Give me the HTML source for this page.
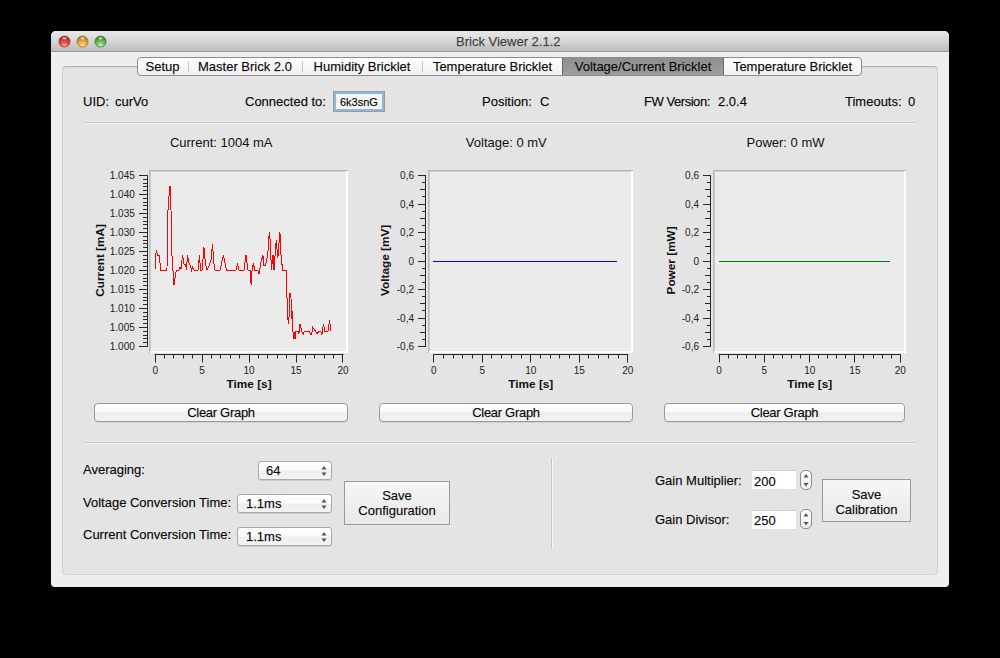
<!DOCTYPE html>
<html><head><meta charset="utf-8"><style>
*{box-sizing:border-box}
html,body{margin:0;padding:0}
body{width:1000px;height:658px;background:#000;position:relative;overflow:hidden;font-family:"Liberation Sans", sans-serif;font-size:13px;color:#0a0a0a;-webkit-text-stroke:0.25px rgba(0,0,0,0.6)}
.a{position:absolute}
.t{position:absolute;white-space:nowrap;line-height:16px;font-size:13px}
.btn{position:absolute;border:1px solid #9a9a9a;border-radius:4px;background:linear-gradient(#ffffff 0%,#fbfbfb 40%,#eeeeee 55%,#f2f2f2 100%);box-shadow:0 1px 0 rgba(0,0,0,0.08)}
.sbtn{position:absolute;border:1px solid #9a9a9a;background:linear-gradient(#f6f6f6,#e9e9e9)}
.combo{position:absolute;border:1px solid #a9a9a9;border-radius:3px;background:linear-gradient(#ffffff 0%,#fafafa 45%,#eeeeee 55%,#f3f3f3 100%);box-shadow:0 1px 0 rgba(0,0,0,0.1)}
.tab{position:absolute;top:58px;height:19px;text-align:center;line-height:17px;white-space:nowrap}
</style></head><body>
<div class="a" style="left:51px;top:31px;width:898px;height:556px;background:#eeeeee;border-radius:5px 5px 4px 4px;overflow:hidden">
  <div class="a" style="left:0;top:0;width:898px;height:21px;background:linear-gradient(#e9e9e9,#d4d4d4 55%,#bcbcbc);border-bottom:1px solid #9a9a9a"></div>
</div>
<div class="t" style="left:456px;top:34px;color:#4d4d4d">Brick Viewer 2.1.2</div>
<svg class="a" style="left:0;top:0" width="120" height="60">
<defs>
<radialGradient id="gr" cx="50%" cy="90%" r="75%"><stop offset="0" stop-color="#ffb4ac"/><stop offset="0.45" stop-color="#f2524a"/><stop offset="0.85" stop-color="#c8342e"/><stop offset="1" stop-color="#a02c28"/></radialGradient>
<radialGradient id="go" cx="50%" cy="90%" r="75%"><stop offset="0" stop-color="#ffeaa2"/><stop offset="0.45" stop-color="#f6b548"/><stop offset="0.85" stop-color="#d28c30"/><stop offset="1" stop-color="#a8742e"/></radialGradient>
<radialGradient id="gg" cx="50%" cy="90%" r="75%"><stop offset="0" stop-color="#d8f8c2"/><stop offset="0.45" stop-color="#7ec862"/><stop offset="0.85" stop-color="#52a040"/><stop offset="1" stop-color="#3e7a34"/></radialGradient>
<radialGradient id="gh" cx="50%" cy="50%" r="50%"><stop offset="0" stop-color="#fff" stop-opacity="0.9"/><stop offset="1" stop-color="#fff" stop-opacity="0"/></radialGradient>
</defs>
<circle cx="64.5" cy="41.5" r="5.5" fill="url(#gr)" stroke="#8c3430" stroke-width="0.8"/>
<circle cx="82.5" cy="41.5" r="5.5" fill="url(#go)" stroke="#966c30" stroke-width="0.8"/>
<circle cx="100.5" cy="41.5" r="5.5" fill="url(#gg)" stroke="#3e7634" stroke-width="0.8"/>
<ellipse cx="64.5" cy="38.3" rx="3" ry="1.7" fill="url(#gh)"/>
<ellipse cx="82.5" cy="38.3" rx="3" ry="1.7" fill="url(#gh)"/>
<ellipse cx="100.5" cy="38.3" rx="3" ry="1.7" fill="url(#gh)"/>
</svg>
<!-- tab panel -->
<div class="a" style="left:62px;top:66px;width:876px;height:509px;border:1px solid #d2d2d2;border-top-color:#b2b2b2;border-radius:4px;background:#e4e4e4;box-shadow:inset 0 1px 1px rgba(0,0,0,0.07)"></div>
<!-- tabs -->
<div class="a" style="left:137px;top:57px;width:725px;height:19px;border:1px solid #8c8c8c;border-radius:4px;background:linear-gradient(#ffffff,#f0f0f0);overflow:hidden">
  <div class="a" style="left:425px;top:0;width:160px;height:17px;background:linear-gradient(#8f8f8f,#9d9d9d)"></div>
  <div class="a" style="left:50px;top:3px;width:1px;height:11px;background:#c8c8c8"></div>
  <div class="a" style="left:164px;top:3px;width:1px;height:11px;background:#c8c8c8"></div>
  <div class="a" style="left:284px;top:3px;width:1px;height:11px;background:#c8c8c8"></div>
  <div class="a" style="left:424px;top:0px;width:1px;height:17px;background:#6a6a6a"></div>
  <div class="a" style="left:585px;top:0px;width:1px;height:17px;background:#6a6a6a"></div>
</div>
<div class="tab" style="left:137px;width:51px">Setup</div>
<div class="tab" style="left:188px;width:114px">Master Brick 2.0</div>
<div class="tab" style="left:302px;width:120px">Humidity Bricklet</div>
<div class="tab" style="left:422px;width:141px">Temperature Bricklet</div>
<div class="tab" style="left:563px;width:160px">Voltage/Current Bricklet</div>
<div class="tab" style="left:723px;width:139px">Temperature Bricklet</div>
<!-- header -->
<div class="t" style="left:83px;top:94px">UID:</div>
<div class="t" style="left:115px;top:94px">curVo</div>
<div class="t" style="left:245px;top:94px">Connected to:</div>
<div class="a" style="left:333px;top:91px;width:52px;height:21px;border:1px solid #9c9c9c;background:#f4f4f4;box-shadow:inset 0 0 0 2px #88b8e4"></div>
<div class="t" style="left:340px;top:94px;font-size:11px">6k3snG</div>
<div class="t" style="left:482px;top:94px">Position:</div>
<div class="t" style="left:540px;top:94px">C</div>
<div class="t" style="left:644px;top:94px;letter-spacing:-0.45px">FW Version:</div>
<div class="t" style="left:718px;top:94px">2.0.4</div>
<div class="t" style="left:845px;top:94px">Timeouts:</div>
<div class="t" style="left:908px;top:94px">0</div>
<div class="a" style="left:83px;top:122px;width:834px;height:1px;background:#c9c9c9"></div>
<div class="a" style="left:83px;top:123px;width:834px;height:1px;background:#f2f2f2"></div>
<svg class="a" style="left:0;top:0" width="1000" height="658" font-family='"Liberation Sans", sans-serif'><g shape-rendering="crispEdges"><rect x="149" y="170" width="199" height="183" fill="#ebebeb"/><rect x="149" y="170" width="199" height="1" fill="#b3b3b3"/><rect x="149" y="170" width="1" height="183" fill="#bcbcbc"/><rect x="150" y="171" width="198" height="1" fill="#cfcfcf"/><rect x="150" y="171" width="1" height="182" fill="#c9c9c9"/><rect x="150" y="351" width="198" height="2" fill="#ffffff"/><rect x="346" y="171" width="2" height="182" fill="#ffffff"/></g><path d="M147.5 175 V346.5" stroke="#262626" stroke-width="1" fill="none"/><path d="M139 175.5H148M143 179.5H148M143 183.5H148M143 186.5H148M143 190.5H148M139 194.5H148M143 198.5H148M143 202.5H148M143 205.5H148M143 209.5H148M139 213.5H148M143 217.5H148M143 221.5H148M143 224.5H148M143 228.5H148M139 232.5H148M143 236.5H148M143 240.5H148M143 243.5H148M143 247.5H148M139 251.5H148M143 255.5H148M143 259.5H148M143 262.5H148M143 266.5H148M139 270.5H148M143 274.5H148M143 278.5H148M143 281.5H148M143 285.5H148M139 289.5H148M143 293.5H148M143 297.5H148M143 300.5H148M143 304.5H148M139 308.5H148M143 312.5H148M143 316.5H148M143 319.5H148M143 323.5H148M139 327.5H148M143 331.5H148M143 335.5H148M143 338.5H148M143 342.5H148M139 346.5H148" stroke="#262626" stroke-width="1" fill="none"/><text x="134.8" y="179.1" text-anchor="end" font-size="10" fill="#222">1.045</text><text x="134.8" y="198.1" text-anchor="end" font-size="10" fill="#222">1.040</text><text x="134.8" y="217.1" text-anchor="end" font-size="10" fill="#222">1.035</text><text x="134.8" y="236.1" text-anchor="end" font-size="10" fill="#222">1.030</text><text x="134.8" y="255.1" text-anchor="end" font-size="10" fill="#222">1.025</text><text x="134.8" y="274.1" text-anchor="end" font-size="10" fill="#222">1.020</text><text x="134.8" y="293.1" text-anchor="end" font-size="10" fill="#222">1.015</text><text x="134.8" y="312.1" text-anchor="end" font-size="10" fill="#222">1.010</text><text x="134.8" y="331.1" text-anchor="end" font-size="10" fill="#222">1.005</text><text x="134.8" y="350.1" text-anchor="end" font-size="10" fill="#222">1.000</text><path d="M154.7 354.5 H343.5" stroke="#262626" stroke-width="1" fill="none"/><path d="M155.5 354.5V362.5M164.5 354.5V358.5M173.5 354.5V358.5M183.5 354.5V358.5M192.5 354.5V358.5M202.5 354.5V362.5M211.5 354.5V358.5M220.5 354.5V358.5M230.5 354.5V358.5M239.5 354.5V358.5M249.5 354.5V362.5M258.5 354.5V358.5M267.5 354.5V358.5M277.5 354.5V358.5M286.5 354.5V358.5M296.5 354.5V362.5M305.5 354.5V358.5M314.5 354.5V358.5M324.5 354.5V358.5M333.5 354.5V358.5M342.5 354.5V362.5" stroke="#262626" stroke-width="1" fill="none"/><text x="155.2" y="374.3" text-anchor="middle" font-size="10" fill="#222">0</text><text x="202.1" y="374.3" text-anchor="middle" font-size="10" fill="#222">5</text><text x="249.1" y="374.3" text-anchor="middle" font-size="10" fill="#222">10</text><text x="296.0" y="374.3" text-anchor="middle" font-size="10" fill="#222">15</text><text x="343.0" y="374.3" text-anchor="middle" font-size="10" fill="#222">20</text><text x="249.1" y="387.6" text-anchor="middle" font-size="11.8" font-weight="bold" fill="#111">Time [s]</text><text transform="translate(103.8 260.4) rotate(-90)" text-anchor="middle" font-size="11.8" font-weight="bold" fill="#111">Current [mA]</text><text x="221.2" y="146.5" text-anchor="middle" font-size="13" fill="#111">Current: 1004 mA</text><g shape-rendering="crispEdges"><rect x="428" y="170" width="205" height="183" fill="#ebebeb"/><rect x="428" y="170" width="205" height="1" fill="#b3b3b3"/><rect x="428" y="170" width="1" height="183" fill="#bcbcbc"/><rect x="429" y="171" width="204" height="1" fill="#cfcfcf"/><rect x="429" y="171" width="1" height="182" fill="#c9c9c9"/><rect x="429" y="351" width="204" height="2" fill="#ffffff"/><rect x="631" y="171" width="2" height="182" fill="#ffffff"/></g><path d="M425.5 175 V346.5" stroke="#262626" stroke-width="1" fill="none"/><path d="M418 175.5H426M422 182.5H426M420 189.5H426M422 196.5H426M418 204.5H426M422 211.5H426M420 218.5H426M422 225.5H426M418 232.5H426M422 239.5H426M420 246.5H426M422 253.5H426M418 261.5H426M422 268.5H426M420 275.5H426M422 282.5H426M418 289.5H426M422 296.5H426M420 303.5H426M422 310.5H426M418 318.5H426M422 325.5H426M420 332.5H426M422 339.5H426M418 346.5H426" stroke="#262626" stroke-width="1" fill="none"/><text x="414" y="179.1" text-anchor="end" font-size="10" fill="#222">0,6</text><text x="414" y="208.1" text-anchor="end" font-size="10" fill="#222">0,4</text><text x="414" y="236.1" text-anchor="end" font-size="10" fill="#222">0,2</text><text x="414" y="265.1" text-anchor="end" font-size="10" fill="#222">0</text><text x="414" y="293.1" text-anchor="end" font-size="10" fill="#222">-0,2</text><text x="414" y="322.1" text-anchor="end" font-size="10" fill="#222">-0,4</text><text x="414" y="350.1" text-anchor="end" font-size="10" fill="#222">-0,6</text><path d="M433.3 354.5 H628.2" stroke="#262626" stroke-width="1" fill="none"/><path d="M433.5 354.5V362.5M443.5 354.5V358.5M453.5 354.5V358.5M462.5 354.5V358.5M472.5 354.5V358.5M482.5 354.5V362.5M491.5 354.5V358.5M501.5 354.5V358.5M511.5 354.5V358.5M521.5 354.5V358.5M530.5 354.5V362.5M540.5 354.5V358.5M550.5 354.5V358.5M559.5 354.5V358.5M569.5 354.5V358.5M579.5 354.5V362.5M588.5 354.5V358.5M598.5 354.5V358.5M608.5 354.5V358.5M618.5 354.5V358.5M627.5 354.5V362.5" stroke="#262626" stroke-width="1" fill="none"/><text x="433.8" y="374.3" text-anchor="middle" font-size="10" fill="#222">0</text><text x="482.3" y="374.3" text-anchor="middle" font-size="10" fill="#222">5</text><text x="530.8" y="374.3" text-anchor="middle" font-size="10" fill="#222">10</text><text x="579.2" y="374.3" text-anchor="middle" font-size="10" fill="#222">15</text><text x="627.7" y="374.3" text-anchor="middle" font-size="10" fill="#222">20</text><text x="530.8" y="387.6" text-anchor="middle" font-size="11.8" font-weight="bold" fill="#111">Time [s]</text><text transform="translate(388.8 260.4) rotate(-90)" text-anchor="middle" font-size="11.8" font-weight="bold" fill="#111">Voltage [mV]</text><text x="506.3" y="146.5" text-anchor="middle" font-size="13" fill="#111">Voltage: 0 mV</text><g shape-rendering="crispEdges"><rect x="713" y="170" width="193" height="183" fill="#ebebeb"/><rect x="713" y="170" width="193" height="1" fill="#b3b3b3"/><rect x="713" y="170" width="1" height="183" fill="#bcbcbc"/><rect x="714" y="171" width="192" height="1" fill="#cfcfcf"/><rect x="714" y="171" width="1" height="182" fill="#c9c9c9"/><rect x="714" y="351" width="192" height="2" fill="#ffffff"/><rect x="904" y="171" width="2" height="182" fill="#ffffff"/></g><path d="M710.5 175 V346.5" stroke="#262626" stroke-width="1" fill="none"/><path d="M703 175.5H711M707 182.5H711M705 189.5H711M707 196.5H711M703 204.5H711M707 211.5H711M705 218.5H711M707 225.5H711M703 232.5H711M707 239.5H711M705 246.5H711M707 253.5H711M703 261.5H711M707 268.5H711M705 275.5H711M707 282.5H711M703 289.5H711M707 296.5H711M705 303.5H711M707 310.5H711M703 318.5H711M707 325.5H711M705 332.5H711M707 339.5H711M703 346.5H711" stroke="#262626" stroke-width="1" fill="none"/><text x="699" y="179.1" text-anchor="end" font-size="10" fill="#222">0,6</text><text x="699" y="208.1" text-anchor="end" font-size="10" fill="#222">0,4</text><text x="699" y="236.1" text-anchor="end" font-size="10" fill="#222">0,2</text><text x="699" y="265.1" text-anchor="end" font-size="10" fill="#222">0</text><text x="699" y="293.1" text-anchor="end" font-size="10" fill="#222">-0,2</text><text x="699" y="322.1" text-anchor="end" font-size="10" fill="#222">-0,4</text><text x="699" y="350.1" text-anchor="end" font-size="10" fill="#222">-0,6</text><path d="M718.6 354.5 H900.7" stroke="#262626" stroke-width="1" fill="none"/><path d="M719.5 354.5V362.5M728.5 354.5V358.5M737.5 354.5V358.5M746.5 354.5V358.5M755.5 354.5V358.5M764.5 354.5V362.5M773.5 354.5V358.5M782.5 354.5V358.5M791.5 354.5V358.5M800.5 354.5V358.5M809.5 354.5V362.5M818.5 354.5V358.5M827.5 354.5V358.5M836.5 354.5V358.5M845.5 354.5V358.5M854.5 354.5V362.5M863.5 354.5V358.5M873.5 354.5V358.5M882.5 354.5V358.5M891.5 354.5V358.5M900.5 354.5V362.5" stroke="#262626" stroke-width="1" fill="none"/><text x="719.1" y="374.3" text-anchor="middle" font-size="10" fill="#222">0</text><text x="764.4" y="374.3" text-anchor="middle" font-size="10" fill="#222">5</text><text x="809.7" y="374.3" text-anchor="middle" font-size="10" fill="#222">10</text><text x="854.9" y="374.3" text-anchor="middle" font-size="10" fill="#222">15</text><text x="900.2" y="374.3" text-anchor="middle" font-size="10" fill="#222">20</text><text x="809.7" y="387.6" text-anchor="middle" font-size="11.8" font-weight="bold" fill="#111">Time [s]</text><text transform="translate(674.5999999999999 260.4) rotate(-90)" text-anchor="middle" font-size="11.8" font-weight="bold" fill="#111">Power [mW]</text><text x="785.5" y="146.5" text-anchor="middle" font-size="13" fill="#111">Power: 0 mW</text><polyline fill="none" stroke="#ff0000" stroke-width="1" shape-rendering="crispEdges" points="155,270 155.5,255 156.5,251.5 157.5,255 159.5,255 160.5,270 167,270 167.2,237 168,210 169.7,186.7 170.4,186.7 171,210 172,256 174,285 176,272 177,270 179,270 180,267 181,269 182.5,255 184,264 185.5,264 186.5,270 187.5,255 189,263 190.5,266 191.5,270 192.5,267 194,270 198,270 199.5,255 200.5,270 202,270 204,247.5 205.5,264 207,270 209,266 211,260 212.5,244.5 214,264 215,270 220,270 223.5,255 226.5,270 236,270 237.5,263.5 239,270 244,270 246,255 247.5,266.8 248,270 250.1,270 251.2,285.4 252.2,267.9 253.3,263.6 254.9,270 257.6,270 259.1,274.3 260.7,263.6 262.9,255.1 263.9,265.7 265.5,265.7 267.7,255.1 269.3,232.2 270.3,241.3 271.4,270 273,255.1 274,270 276.2,240.2 277.8,258.3 279.9,232.2 281,255.1 282.6,270 286.3,270 286.7,286.9 287.5,316 288.5,323.9 289.1,316 289.7,293.6 290.9,293.6 291.5,318.5 292.2,311.2 293.1,334.3 294,339.1 294.6,331.8 295.2,339.1 296,331.2 298.2,331.2 298.8,334.3 300,324.5 301.9,331.8 303.1,334.3 304.3,331.2 309.2,331.2 310.4,334.3 311.6,334.3 312.8,327.6 315.2,330.6 317,334.3 318.9,331.2 320.7,331.2 321.9,334.3 323.5,323.9 324.7,331.2 328,331.2 329.6,320.3 330.8,331.2"/><path d="M433 261.5H617" stroke="#0000ff" stroke-width="1"/><path d="M719 261.5H890" stroke="#008000" stroke-width="1"/></svg>
<!-- clear graph buttons -->
<div class="btn" style="left:94px;top:403px;width:254px;height:19px"></div>
<div class="btn" style="left:379px;top:403px;width:254px;height:19px"></div>
<div class="btn" style="left:664px;top:403px;width:241px;height:19px"></div>
<div class="t" style="left:94px;top:405px;width:254px;text-align:center;letter-spacing:-0.3px">Clear Graph</div>
<div class="t" style="left:379px;top:405px;width:254px;text-align:center;letter-spacing:-0.3px">Clear Graph</div>
<div class="t" style="left:664px;top:405px;width:241px;text-align:center;letter-spacing:-0.3px">Clear Graph</div>
<div class="a" style="left:83px;top:442px;width:834px;height:1px;background:#c9c9c9"></div>
<div class="a" style="left:83px;top:443px;width:834px;height:1px;background:#f2f2f2"></div>
<!-- bottom left -->
<div class="t" style="left:83px;top:462px">Averaging:</div>
<div class="t" style="left:83px;top:495px">Voltage Conversion Time:</div>
<div class="t" style="left:83px;top:527px">Current Conversion Time:</div>
<div class="combo" style="left:258px;top:461px;width:74px;height:19px"></div>
<div class="combo" style="left:237px;top:494px;width:95px;height:19px"></div>
<div class="combo" style="left:237px;top:527px;width:95px;height:19px"></div>
<div class="t" style="left:266px;top:463px">64</div>
<div class="t" style="left:246px;top:496px">1.1ms</div>
<div class="t" style="left:246px;top:529px">1.1ms</div>
<svg class="a" style="left:0;top:0" width="1000" height="658">
<path d="M321.5 469.5 L324 466 L326.5 469.5Z M321.5 472.5 L324 476 L326.5 472.5Z" fill="#555"/>
<path d="M321.5 502.5 L324 499 L326.5 502.5Z M321.5 505.5 L324 509 L326.5 505.5Z" fill="#555"/>
<path d="M321.5 535.5 L324 532 L326.5 535.5Z M321.5 538.5 L324 542 L326.5 538.5Z" fill="#555"/>
</svg>
<div class="sbtn" style="left:344px;top:481px;width:106px;height:44px"></div>
<div class="t" style="left:344px;top:488px;width:106px;text-align:center;line-height:15px">Save<br>Configuration</div>
<!-- separator -->
<div class="a" style="left:551px;top:458px;width:1px;height:90px;background:#c4c4c4"></div>
<div class="a" style="left:552px;top:458px;width:1px;height:90px;background:#f6f6f6"></div>
<!-- bottom right -->
<div class="t" style="left:655px;top:473px">Gain Multiplier:</div>
<div class="t" style="left:655px;top:512px">Gain Divisor:</div>
<div class="a" style="left:751px;top:470px;width:46px;height:20px;background:#fff;border:1px solid #e0e0e0;border-top-color:#cdcdcd"></div>
<div class="a" style="left:751px;top:510px;width:46px;height:20px;background:#fff;border:1px solid #e0e0e0;border-top-color:#cdcdcd"></div>
<div class="t" style="left:754px;top:474px">200</div>
<div class="t" style="left:754px;top:513px">250</div>
<div class="a" style="left:800px;top:470px;width:12px;height:20px;border:1px solid #8a8a8a;border-radius:5px;background:linear-gradient(#ffffff,#eeeeee)"></div>
<div class="a" style="left:800px;top:509px;width:12px;height:20px;border:1px solid #8a8a8a;border-radius:5px;background:linear-gradient(#ffffff,#eeeeee)"></div>
<svg class="a" style="left:0;top:0" width="1000" height="658">
<path d="M803.5 477.5 L806 474 L808.5 477.5Z M803.5 483 L806 486.5 L808.5 483Z" fill="#555"/>
<path d="M803.5 516.5 L806 513 L808.5 516.5Z M803.5 522 L806 525.5 L808.5 522Z" fill="#555"/>
</svg>
<div class="sbtn" style="left:822px;top:479px;width:89px;height:43px"></div>
<div class="t" style="left:822px;top:487px;width:89px;text-align:center;line-height:15px">Save<br>Calibration</div>
</body></html>
